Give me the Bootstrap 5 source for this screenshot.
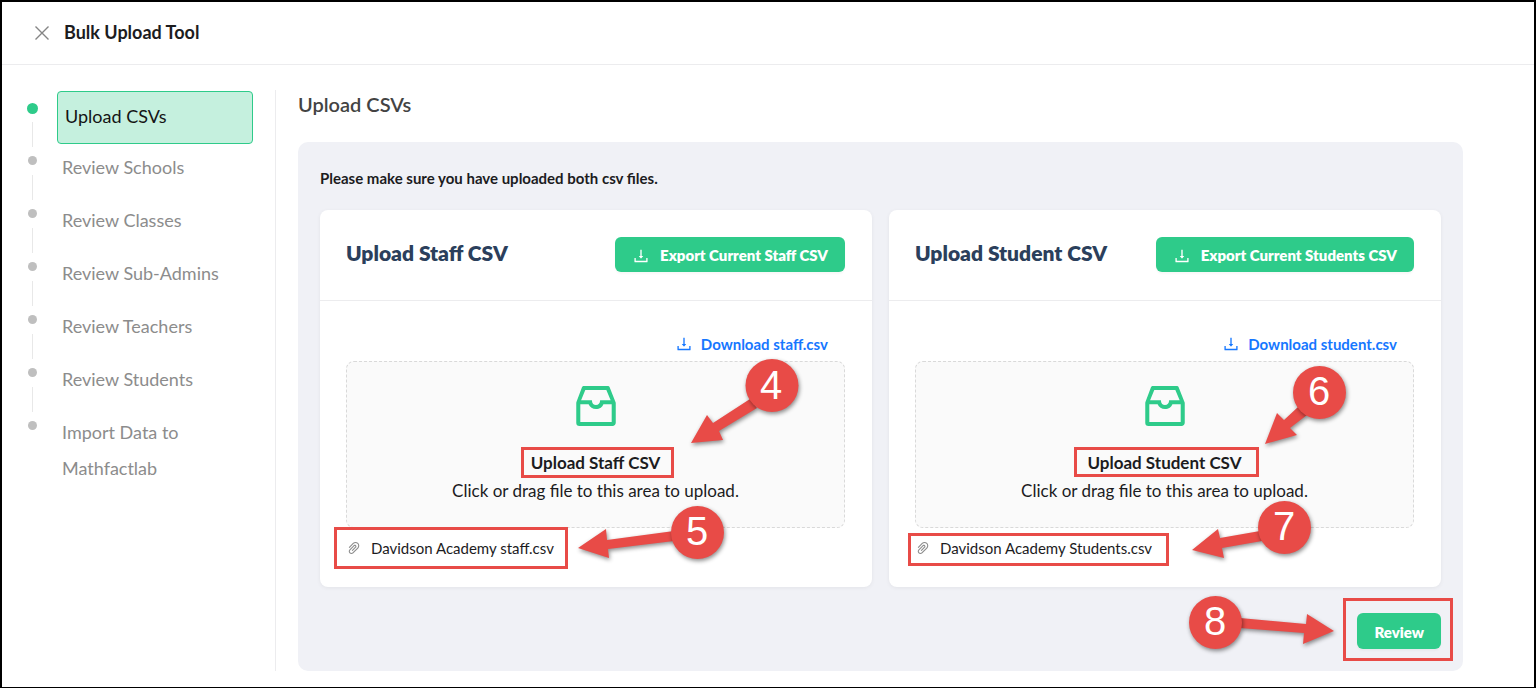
<!DOCTYPE html>
<html lang="en">
<head>
<meta charset="utf-8">
<meta name="viewport" content="width=device-width, initial-scale=1">
<title>Bulk Upload Tool</title>
<link href="https://cdn.jsdelivr.net/npm/bootstrap@5.3.0/dist/css/bootstrap.min.css" rel="stylesheet">
<style>
  :root { --brand: #2ecb8a; --mark: #e84b47; --rule: #ececee; }
  body { font-family: Lato, "Open Sans", sans-serif; font-size: 16px; color: #1c1c1e; background: #fff; }
  .frame { min-height: 100vh; border: 2px solid #000; border-bottom-width: 1px; }
  .ico { fill: currentColor; flex: none; }

  .topbar { height: 63px; padding: 0 32px; border-bottom: 1px solid var(--rule); }
  .topbar h1 { font-size: 18px; line-height: 24px; font-weight: 700; margin: 0 0 2px 14px; }
  .close-btn { border: 0; background: none; padding: 0; color: #858585; width: 16px; height: 16px; }

  .layout { padding: 25px 71px 16px 0; }
  .side { width: 274px; flex: none; border-right: 1px solid var(--rule); padding: 1px 22px 0 25px; font-size: 18px; line-height: 36px; }
  .step { height: 53px; color: #8c8c8c; }
  .step a { color: inherit; text-decoration: none; }
  .rail { width: 11px; flex: none; padding-top: 12px; }
  .dot { width: 9px; height: 9px; flex: none; border-radius: 50%; background: #bfbfbf; }
  .tail { width: 1px; height: 25px; flex: none; margin-top: 10px; background: #e8e8e8; }
  .step-label { flex: 1; margin-left: 19px; padding: 5px; }
  .step.current { color: #141414; }
  .step.current .dot { width: 11px; height: 11px; background: var(--brand); }
  .step.current .tail { margin-top: 8px; }
  .step.current .step-label { padding: 6px 7px; border: 1px solid var(--brand); border-radius: 4px; background: #c5f0de; }

  .main { flex: 1; min-width: 0; padding-left: 22px; }
  .main h2 { font-size: 20px; line-height: 28px; font-weight: 600; color: #434343; margin-bottom: 24px; }
  .panel { background: #f0f1f6; border-radius: 10px; padding: 24px 22px 22px; }
  .panel-note { font-size: 15px; line-height: 24px; font-weight: 700; margin-bottom: 20px; }
  .cards { gap: 17px; }
  .upload { flex: 1; background: #fff; border-radius: 8px; box-shadow: 0 1px 4px rgba(0,0,0,.06); position: relative; padding-bottom: 22px; }
  .upload-head { padding: 27px 27px 28px 26px; border-bottom: 1px solid var(--rule); }
  .upload-head h3 { font-family: Lato, sans-serif; font-size: 21px; line-height: 32px; font-weight: 800; color: #2b3f5c; }
  .upload-body { padding: 26px 27px 0 26px; }
  .btn-brand { background: var(--brand); color: #fff; border: 0; border-radius: 6px; font-size: 15px; line-height: 19px; font-weight: 800; padding: 9px 17px 7px; box-shadow: 0 2px 2px rgba(0,0,0,.03); gap: 10px; }
  .btn-brand:hover { background: #27b87c; color: #fff; }
  .dl-link { font-size: 15px; line-height: 34px; font-weight: 700; color: #1677ff; text-decoration: none; padding-right: 17px; }
  .drop { height: 167px; border: 1px dashed #d9d9d9; border-radius: 8px; background: #fafafa; padding-top: 17px; cursor: pointer; font-size: 17px; line-height: 28px; }
  .drop .ico { color: var(--brand); margin-bottom: 16px; }
  .drop-title { position: relative; font-weight: 700; }
  .file-row { font-size: 15px; line-height: 34px; margin-top: 3px; }
  .file-name { position: relative; gap: 9px; }
  .file-name .ico { color: #8c8c8c; }
  .file-name a { color: inherit; text-decoration: none; }
  .actions { position: relative; margin-top: 26px; }
  .review-btn { line-height: 20px; padding: 9px 17px 7px; }

  /* tutorial highlights and callouts lie over the interface */
  .hl { position: absolute; border: 3px solid var(--mark); pointer-events: none; }
  .hl-title { inset: -2px -14px -1px -10px; }
  .hl-title-wide { inset: -2px -17px 0 -13px; }
  .hl-file { inset: -4px -14px -4px -12px; }
  .hl-file-tight { inset: 2px -17px -1px -7px; }
  .hl-review { top: -15px; right: -12px; bottom: -12px; width: 110px; }
  .callout { position: absolute; pointer-events: none; overflow: visible; fill: var(--mark); }
  .callout polygon, .callout circle { filter: drop-shadow(1px 2px 2px rgba(0,0,0,.45)); }
  .callout text { fill: #fff; font-family: "Liberation Sans", sans-serif; font-size: 40px; text-anchor: middle; }
  .callout-card { left: calc(50% - 20px); top: 146px; }
  .callout-review { right: 98px; top: -22px; }
</style>
</head>
<body>
<svg class="d-none" aria-hidden="true">
  <symbol id="i-download" viewBox="0 0 1024 1024"><path d="M505.700 661a8 8 0 0 0 12.600 0l112-141.700c4.100-5.200.4-12.900-6.300-12.900h-74.100V168c0-4.400-3.600-8-8-8h-60c-4.400 0-8 3.600-8 8v338.300H400c-6.700 0-10.400 7.700-6.300 12.900l112 141.800zM878 626h-60c-4.400 0-8 3.600-8 8v154H214V634c0-4.400-3.600-8-8-8h-60c-4.400 0-8 3.600-8 8v198c0 17.700 14.300 32 32 32h684c17.700 0 32-14.300 32-32V634c0-4.400-3.600-8-8-8z"/></symbol>
  <symbol id="i-inbox" viewBox="0 0 1024 1024"><path d="M885.200 446.300l-.2-.8-112.200-285.100c-5-16.100-19.900-27.200-36.800-27.200H281.200c-17 0-32.100 11.300-36.900 27.600L139.400 443l-.3.7-.2.8c-1.300 4.900-1.700 9.900-1 14.800-.1 1.600-.2 3.200-.2 4.800V830a60.900 60.900 0 0 0 60.800 60.800h627.200c33.500 0 60.800-27.300 60.900-60.800V464.100c0-1.300 0-2.600-.1-3.700.4-4.900 0-9.600-1.300-14.100zm-295.800-43l-.3 15.700c-.8 44.900-31.800 75.100-77.100 75.100-22.100 0-41.100-7.100-54.800-20.600S436 441.200 435.600 419l-.3-15.700H229.500L309 210h399.200l81.700 193.300H589.400zm-375 76.800h157.300c24.300 57.100 76 90.800 140.400 90.800 33.700 0 65-9.400 90.300-27.200 22.200-15.600 39.500-37.400 50.700-63.600h156.500V814H214.400V480.100z"/></symbol>
  <symbol id="i-clip" viewBox="0 0 1024 1024"><path d="M779.300 196.600c-94.200-94.200-247.600-94.200-341.700 0l-261 260.800c-1.700 1.700-2.600 4-2.600 6.400s.9 4.700 2.600 6.400l36.900 36.900a9 9 0 0 0 12.700 0l261-260.800c32.400-32.400 75.500-50.200 121.300-50.200s88.900 17.800 121.200 50.200c32.400 32.400 50.200 75.500 50.200 121.200 0 45.800-17.800 88.800-50.200 121.200l-266 265.900-43.100 43.100c-40.300 40.300-105.800 40.300-146.100 0-19.500-19.500-30.200-45.400-30.200-73s10.700-53.500 30.200-73l263.900-263.800c6.700-6.600 15.500-10.300 24.900-10.300h.1c9.400 0 18.100 3.700 24.700 10.300 6.700 6.700 10.300 15.500 10.300 24.900 0 9.300-3.700 18.100-10.300 24.700L372.400 653c-1.700 1.700-2.600 4-2.600 6.400s.9 4.700 2.600 6.400l36.900 36.900a9 9 0 0 0 12.700 0l215.600-215.600c19.900-19.900 30.800-46.300 30.800-74.400s-11-54.600-30.800-74.400c-41.100-41.100-107.900-41-149 0L463 364 224.800 602.100A172.220 172.220 0 0 0 174 724.800c0 46.300 18.100 89.800 50.800 122.500 33.900 33.800 78.300 50.700 122.700 50.700 44.400 0 88.800-16.900 122.600-50.700l309.200-309C824.800 492.700 850 432 850 367.500c.1-64.600-25.100-125.300-70.700-170.900z"/></symbol>
</svg>

<div class="frame">
  <header class="topbar d-flex align-items-center">
    <button type="button" class="close-btn d-flex" aria-label="Close"><svg width="16" height="16" viewBox="0 0 16 16"><path d="M1.500 1.500l13 13M14.500 1.500l-13 13" stroke="currentColor" stroke-width="1.400" fill="none"/></svg></button>
    <h1>Bulk Upload Tool</h1>
  </header>

  <div class="layout d-flex">
    <nav class="side" aria-label="Upload steps">
      <ol class="list-unstyled mb-0">
        <li class="step current d-flex"><span class="rail d-flex flex-column align-items-center"><span class="dot"></span><span class="tail"></span></span><a href="#" class="step-label" aria-current="step">Upload CSVs</a></li>
        <li class="step d-flex"><span class="rail d-flex flex-column align-items-center"><span class="dot"></span><span class="tail"></span></span><a href="#" class="step-label">Review Schools</a></li>
        <li class="step d-flex"><span class="rail d-flex flex-column align-items-center"><span class="dot"></span><span class="tail"></span></span><a href="#" class="step-label">Review Classes</a></li>
        <li class="step d-flex"><span class="rail d-flex flex-column align-items-center"><span class="dot"></span><span class="tail"></span></span><a href="#" class="step-label">Review Sub-Admins</a></li>
        <li class="step d-flex"><span class="rail d-flex flex-column align-items-center"><span class="dot"></span><span class="tail"></span></span><a href="#" class="step-label">Review Teachers</a></li>
        <li class="step d-flex"><span class="rail d-flex flex-column align-items-center"><span class="dot"></span><span class="tail"></span></span><a href="#" class="step-label">Review Students</a></li>
        <li class="step d-flex"><span class="rail d-flex flex-column align-items-center"><span class="dot"></span></span><a href="#" class="step-label">Import Data to<br>Mathfactlab</a></li>
      </ol>
    </nav>

    <main class="main">
      <h2>Upload CSVs</h2>
      <section class="panel">
        <p class="panel-note">Please make sure you have uploaded both csv files.</p>
        <div class="cards d-flex">
          <article class="upload">
            <div class="upload-head d-flex justify-content-between">
              <h3 class="mb-0">Upload Staff CSV</h3>
              <button type="button" class="btn btn-brand d-flex align-items-center"><svg class="ico" width="18" height="18"><use href="#i-download"/></svg>Export Current Staff CSV</button>
            </div>
            <div class="upload-body">
              <div class="d-flex justify-content-end">
                <a href="#" class="dl-link d-flex align-items-center gap-2"><svg class="ico" width="18" height="18"><use href="#i-download"/></svg>Download staff.csv</a>
              </div>
              <input type="file" id="staff-file" class="visually-hidden" accept=".csv">
              <label for="staff-file" class="drop d-flex flex-column align-items-center">
                <svg class="ico" width="54" height="54"><use href="#i-inbox"/></svg>
                <span class="drop-title">Upload Staff CSV<span class="hl hl-title"></span></span>
                <span>Click or drag file to this area to upload.</span>
              </label>
              <div class="file-row d-flex">
                <span class="file-name d-flex align-items-center"><svg class="ico" width="16" height="16"><use href="#i-clip"/></svg><a href="#">Davidson Academy staff.csv</a><span class="hl hl-file"></span></span>
              </div>
            </div>
            <svg class="callout callout-card" width="230" height="210" viewBox="576 356 230 210">
              <polygon points="691,443 707,415 713,423 750,399 757,408 719,431 723,440"/>
              <circle cx="772" cy="385.500" r="26.500"/><text x="771" y="399">4</text>
              <polygon points="578,548 606,529 607,540 674,531 674,541 608,549 609,558"/>
              <circle cx="697.500" cy="532.500" r="26.500"/><text x="697" y="545">5</text>
            </svg>
          </article>

          <article class="upload">
            <div class="upload-head d-flex justify-content-between">
              <h3 class="mb-0">Upload Student CSV</h3>
              <button type="button" class="btn btn-brand d-flex align-items-center"><svg class="ico" width="18" height="18"><use href="#i-download"/></svg>Export Current Students CSV</button>
            </div>
            <div class="upload-body">
              <div class="d-flex justify-content-end">
                <a href="#" class="dl-link d-flex align-items-center gap-2"><svg class="ico" width="18" height="18"><use href="#i-download"/></svg>Download student.csv</a>
              </div>
              <input type="file" id="student-file" class="visually-hidden" accept=".csv">
              <label for="student-file" class="drop d-flex flex-column align-items-center">
                <svg class="ico" width="54" height="54"><use href="#i-inbox"/></svg>
                <span class="drop-title">Upload Student CSV<span class="hl hl-title-wide"></span></span>
                <span>Click or drag file to this area to upload.</span>
              </label>
              <div class="file-row d-flex">
                <span class="file-name d-flex align-items-center"><svg class="ico" width="16" height="16"><use href="#i-clip"/></svg><a href="#">Davidson Academy Students.csv</a><span class="hl hl-file-tight"></span></span>
              </div>
            </div>
            <svg class="callout callout-card" width="230" height="210" viewBox="1145 356 230 210">
              <polygon points="1265,444 1277,413 1284,420 1298,407 1307,415 1290,428 1297,435"/>
              <circle cx="1319.500" cy="392.500" r="26.500"/><text x="1319" y="405">6</text>
              <polygon points="1192,550 1218,529 1220,538 1260,531 1262,541 1222,548 1224,558"/>
              <circle cx="1284.500" cy="527.500" r="26.500"/><text x="1284" y="540">7</text>
            </svg>
          </article>
        </div>

        <div class="actions d-flex justify-content-end">
          <button type="button" class="btn btn-brand review-btn">Review</button>
          <span class="hl hl-review"></span>
          <svg class="callout callout-review" width="160" height="70" viewBox="1183 591 160 70">
            <polygon points="1334,631 1307,614 1306,624 1240,618 1240,628 1304,633 1303,644"/>
            <circle cx="1215.500" cy="622.500" r="26.500"/><text x="1215" y="635">8</text>
          </svg>
        </div>
      </section>
    </main>
  </div>
</div>
<script src="https://cdn.jsdelivr.net/npm/bootstrap@5.3.0/dist/js/bootstrap.bundle.min.js"></script>
</body>
</html>
